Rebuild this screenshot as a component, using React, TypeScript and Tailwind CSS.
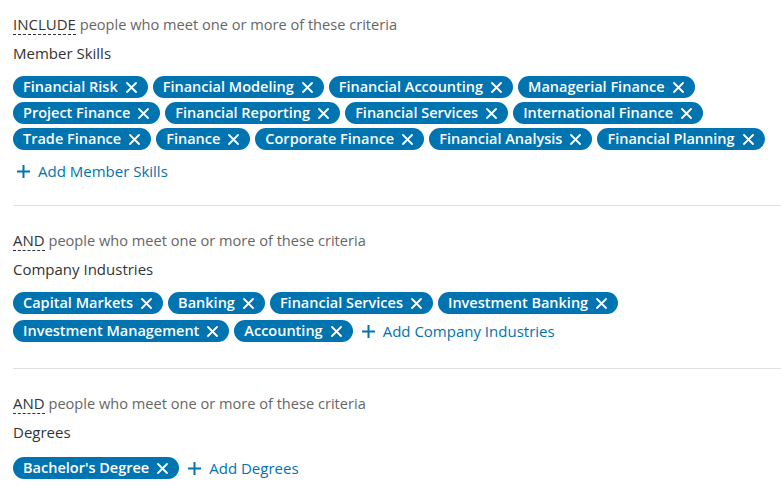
import React from "react";

type Section = {
  lead: string;
  title: string;
  rows: string[][];
  addLabel: string;
  addInline: boolean;
  box: string;
  list: string;
};

const sections: Section[] = [
  {
    lead: "INCLUDE",
    title: "Member Skills",
    rows: [
      ["Financial Risk", "Financial Modeling", "Financial Accounting", "Managerial Finance"],
      ["Project Finance", "Financial Reporting", "Financial Services", "International Finance"],
      ["Trade Finance", "Finance", "Corporate Finance", "Financial Analysis", "Financial Planning"],
    ],
    addLabel: "Add Member Skills",
    addInline: false,
    box: "pt-6 pb-[22px] border-b border-[#e0e0e0]",
    list: "mt-[13px] gap-[4px]",
  },
  {
    lead: "AND",
    title: "Company Industries",
    rows: [
      ["Capital Markets", "Banking", "Financial Services", "Investment Banking"],
      ["Investment Management", "Accounting"],
    ],
    addLabel: "Add Company Industries",
    addInline: true,
    box: "pt-6 pb-[25px] border-b border-[#e0e0e0]",
    list: "mt-[13px] gap-[5px]",
  },
  {
    lead: "AND",
    title: "Degrees",
    rows: [["Bachelor's Degree"]],
    addLabel: "Add Degrees",
    addInline: true,
    box: "pt-6",
    list: "mt-[14px] gap-[4px]",
  },
];

const CloseIcon = () => (
  <svg width="11" height="11" viewBox="0 0 11 11" className="shrink-0">
    <path d="M1 1 L10 10 M10 1 L1 10" stroke="white" strokeWidth="1.8" strokeLinecap="round" />
  </svg>
);

const PlusIcon = () => (
  <svg width="15" height="15" viewBox="0 0 15 15" className="shrink-0">
    <path d="M7.5 1 V14 M1 7.5 H14" stroke="#0073b1" strokeWidth="2" />
  </svg>
);

const Chip = ({ label }: { label: string }) => (
  <span className="flex items-center gap-[8px] h-[22px] pl-[10px] pr-[11px] rounded-full bg-[#0073b1] text-white text-[14.5px] leading-5 font-semibold whitespace-nowrap">
    {label}
    <CloseIcon />
  </span>
);

const AddLink = ({ label }: { label: string }) => (
  <button className="flex items-center gap-[7px] h-6 pl-[3px] text-[15px] leading-5 text-[#0073b1] whitespace-nowrap">
    <PlusIcon />
    {label}
  </button>
);

const CriteriaSection = ({ section }: { section: Section }) => (
  <div className={section.box}>
    <p className="text-[14.6px] leading-5 text-[#666666]">
      <span className="text-[#333333] text-[15px] border-b border-dashed border-[#333333]">{section.lead}</span>{" "}
      people who meet one or more of these criteria
    </p>
    <p className="mt-[9px] text-[15px] leading-5 text-[#333333]">{section.title}</p>
    <div className={`flex flex-col ${section.list}`}>
      {section.rows.map((row, i) => (
        <div key={i} className="flex items-center gap-[5px]">
          {row.map((label) => (
            <Chip key={label} label={label} />
          ))}
          {section.addInline && i === section.rows.length - 1 && <AddLink label={section.addLabel} />}
        </div>
      ))}
    </div>
    {!section.addInline && (
      <div className="mt-[9px]">
        <AddLink label={section.addLabel} />
      </div>
    )}
  </div>
);

export default function App() {
  return (
    <div className="w-[781px] h-[489px] overflow-hidden bg-white pl-[13px] -mt-[10px] font-['Open_Sans','Noto_Sans',sans-serif]">
      {sections.map((s, i) => (
        <CriteriaSection key={i} section={s} />
      ))}
    </div>
  );
}
